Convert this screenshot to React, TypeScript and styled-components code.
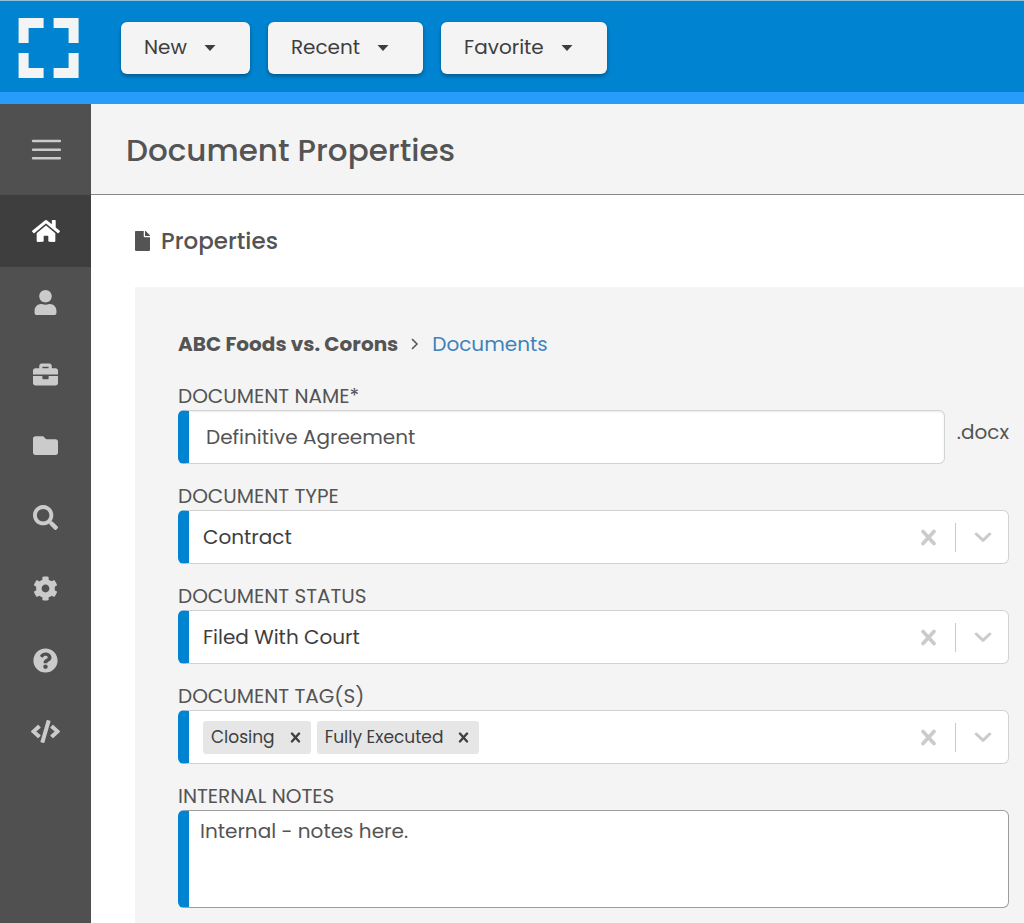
import React from "react";
import styled, { createGlobalStyle } from "styled-components";
import {
  FaHome,
  FaUser,
  FaBriefcase,
  FaFolder,
  FaSearch,
  FaCog,
  FaQuestionCircle,
  FaCode,
  FaFile,
} from "react-icons/fa";

const color = {
  brand: "#0084d1",
  brandLight: "#269df9",
  sidebar: "#505050",
  sidebarActive: "#3e3e3e",
  surface: "#f4f4f4",
  text: "#545454",
  dark: "#3e3e3e",
  border: "#d2d2d2",
  muted: "#cbcbcb",
};

const GlobalStyle = createGlobalStyle`
  *, *::before, *::after { box-sizing: border-box; }
  body {
    margin: 0;
    background: #fff;
    color: ${color.text};
    font-family: Poppins, Inter, "Open Sans", sans-serif;
    font-size: 20px;
    font-weight: 400;
    line-height: 30px;
    font-feature-settings: "cv11" 1;
  }
  button, input, select, textarea {
    font: inherit;
    font-feature-settings: inherit;
    color: inherit;
    margin: 0;
  }
  button { cursor: pointer; }
`;

const Page = styled.div`
  display: flex;
  flex-direction: column;
  min-height: 100vh;
`;

const TopBar = styled.header`
  display: flex;
  align-items: center;
  gap: 18px;
  height: 104px;
  padding: 2px 18px 0;
  background: ${color.brand};
  border-top: 1px solid #8fc0dc;
  border-bottom: 12px solid ${color.brandLight};
`;

const LogoLink = styled.a`
  display: flex;
  margin-right: 24px;
  color: ${color.surface};
`;

const MenuButton = styled.button`
  display: flex;
  align-items: center;
  gap: 17px;
  height: 52px;
  padding: 0 34px 2px 23px;
  border: 0;
  border-radius: 6px;
  background: ${color.surface};
  color: ${color.dark};
  box-shadow: 0 2px 4px rgba(0, 0, 0, 0.35);
`;

const Columns = styled.div`
  display: flex;
  flex: 1;
`;

const Sidebar = styled.nav`
  flex: none;
  width: 91px;
  background: ${color.sidebar};
`;

const MenuToggle = styled.button`
  display: flex;
  align-items: center;
  justify-content: center;
  width: 100%;
  height: 91px;
  padding: 0;
  border: 0;
  background: none;
  color: ${color.muted};
`;

const NavList = styled.ul`
  display: grid;
  grid-auto-rows: 1fr;
  height: 572px;
  margin: 0;
  padding: 0;
  list-style: none;
`;

const NavLink = styled.a<{ $active?: boolean }>`
  display: flex;
  align-items: center;
  justify-content: center;
  height: 100%;
  padding-top: 1px;
  font-size: 25px;
  background: ${(p) => (p.$active ? color.sidebarActive : "transparent")};
  color: ${(p) => (p.$active ? "#fff" : color.muted)};
`;

const Main = styled.main`
  display: flex;
  flex: 1;
  flex-direction: column;
  min-width: 0;
`;

const TitleBar = styled.div`
  display: flex;
  align-items: center;
  height: 91px;
  padding: 2px 35px 0;
  background: ${color.surface};
  border-bottom: 1px solid #868686;
`;

const Title = styled.h1`
  margin: 0;
  font-size: 31px;
  font-weight: 500;
  line-height: 48px;
`;

const SectionTitle = styled.h2`
  display: flex;
  align-items: center;
  gap: 11px;
  height: 92px;
  margin: 0;
  padding: 0 44px;
  font-size: 23px;
  font-weight: 500;

  svg { width: 15px; height: 20px; }
`;

const Panel = styled.form`
  flex: 1;
  margin-left: 44px;
  padding: 42px 15px 15px 43px;
  background: ${color.surface};
`;

const Breadcrumb = styled.div`
  display: flex;
  align-items: center;
  gap: 13px;
  margin-bottom: 23px;
`;

const Matter = styled.strong`
  font-weight: 700;
`;

const CrumbLink = styled.a`
  color: #3d82bb;
  text-decoration: none;
`;

const Field = styled.div`
  display: flex;
  flex-direction: column;
  margin-bottom: 18px;

  &:last-child { margin-bottom: 0; }
`;

const Label = styled.label`
  line-height: 28px;
  text-transform: uppercase;
`;

const NameRow = styled.div`
  display: flex;
  gap: 12px;
`;

const Extension = styled.span`
  padding-top: 7px;
`;

const TextInput = styled.input`
  flex: 1;
  min-width: 0;
  height: 54px;
  padding: 0 17px;
  border: 1px solid ${color.border};
  border-left: 11px solid ${color.brand};
  border-radius: 6px;
  background: #fff;
  box-shadow: inset 0 1px 2px rgba(0, 0, 0, 0.08);
  outline: 0;
`;

const Control = styled.div`
  display: flex;
  align-items: center;
  height: 54px;
  border: 1px solid ${color.border};
  border-left: 11px solid ${color.brand};
  border-radius: 6px;
  background: #fff;
  color: ${color.dark};
`;

const Select = styled.select`
  flex: 1;
  align-self: stretch;
  min-width: 0;
  padding: 0 14px;
  border: 0;
  background: none;
  appearance: none;
  outline: 0;
`;

const Tags = styled.div`
  display: flex;
  flex: 1;
  gap: 6px;
  padding-left: 14px;
`;

const Tag = styled.span`
  display: flex;
  align-items: center;
  gap: 15px;
  height: 33px;
  padding: 0 10px 0 8px;
  border-radius: 3px;
  background: #e6e6e6;
  font-size: 17px;
`;

const IconButton = styled.button`
  display: flex;
  padding: 0;
  border: 0;
  background: none;
`;

const Indicators = styled.div`
  display: flex;
  align-items: center;
  gap: 18px;
  padding-right: 16px;
  color: ${color.muted};
`;

const Divider = styled.span`
  width: 1px;
  height: 29px;
  background: ${color.muted};
`;

const Notes = styled.textarea`
  display: block;
  height: 98px;
  padding: 5px 11px;
  border: 1px solid #9c9c9c;
  border-left: 11px solid ${color.brand};
  border-radius: 6px;
  background: #fff;
  resize: none;
  outline: 0;
`;

const Logo = () => (
  <svg width="61" height="60" viewBox="0 0 61 60" fill="currentColor" aria-hidden="true">
    <path d="M.6 0h25v10h-15v15H.6zM35.600 0h25v25h-10V10h-15zM.6 35h10v15h15v10H.6zM50.600 35h10v25h-25V50h15z" />
  </svg>
);

const Caret = () => (
  <svg width="12" height="8" viewBox="0 0 12 8" fill="currentColor" aria-hidden="true">
    <path d="M.5 2h11L6 8z" />
  </svg>
);

const Bars = () => (
  <svg width="30" height="22" viewBox="0 0 30 22" stroke="currentColor" strokeWidth="2.400" strokeLinecap="round" aria-hidden="true">
    <path d="M2 2h27M2 10.700h27M2 19.300h27" />
  </svg>
);

const Cross = ({ size, weight }: { size: number; weight: number }) => (
  <svg width={size} height={size} viewBox="0 0 14 14" stroke="currentColor" strokeWidth={weight} strokeLinecap="round" aria-hidden="true">
    <path d="M2.500 2l9 10M11.500 2l-9 10" />
  </svg>
);

const Chevron = () => (
  <svg width="18" height="10" viewBox="0 0 18 10" fill="none" stroke="currentColor" strokeWidth="3" strokeLinecap="round" strokeLinejoin="round" aria-hidden="true">
    <path d="M2.300 2L9 8.300l6.700-6.300" />
  </svg>
);

const navItems = [
  { name: "Home", icon: <FaHome size={28} />, active: true },
  { name: "Contacts", icon: <FaUser /> },
  { name: "Matters", icon: <FaBriefcase /> },
  { name: "Documents", icon: <FaFolder /> },
  { name: "Search", icon: <FaSearch /> },
  { name: "Settings", icon: <FaCog /> },
  { name: "Help", icon: <FaQuestionCircle /> },
  { name: "Developer", icon: <FaCode size={29} /> },
];

const FieldIndicators = ({ name }: { name: string }) => (
  <Indicators>
    <IconButton type="button" aria-label={`Clear ${name}`}>
      <Cross size={17} weight={3} />
    </IconButton>
    <Divider />
    <IconButton type="button" aria-label={`Open ${name}`}>
      <Chevron />
    </IconButton>
  </Indicators>
);

const SelectField = ({ id, label, value }: { id: string; label: string; value: string }) => (
  <Field>
    <Label htmlFor={id}>{label}</Label>
    <Control>
      <Select id={id} defaultValue={value}>
        <option>{value}</option>
      </Select>
      <FieldIndicators name={label} />
    </Control>
  </Field>
);

export default function App() {
  return (
    <Page>
      <GlobalStyle />
      <TopBar>
        <LogoLink href="#" aria-label="Dashboard">
          <Logo />
        </LogoLink>
        {["New", "Recent", "Favorite"].map((item) => (
          <MenuButton key={item} type="button">
            {item}
            <Caret />
          </MenuButton>
        ))}
      </TopBar>
      <Columns>
        <Sidebar>
          <MenuToggle type="button" aria-label="Toggle menu">
            <Bars />
          </MenuToggle>
          <NavList>
            {navItems.map((item) => (
              <li key={item.name}>
                <NavLink href="#" aria-label={item.name} $active={item.active}>
                  {item.icon}
                </NavLink>
              </li>
            ))}
          </NavList>
        </Sidebar>
        <Main>
          <TitleBar>
            <Title>Document Properties</Title>
          </TitleBar>
          <SectionTitle>
            <FaFile />
            Properties
          </SectionTitle>
          <Panel>
            <Breadcrumb>
              <Matter>ABC Foods vs. Corons</Matter>
              <svg width="8" height="12" viewBox="0 0 8 12" fill="none" stroke="currentColor" strokeWidth="1.500" aria-hidden="true">
                <path d="M1 1l5 5-5 5" />
              </svg>
              <CrumbLink href="#">Documents</CrumbLink>
            </Breadcrumb>
            <Field>
              <Label htmlFor="name">Document Name*</Label>
              <NameRow>
                <TextInput id="name" type="text" defaultValue="Definitive Agreement" />
                <Extension>.docx</Extension>
              </NameRow>
            </Field>
            <SelectField id="type" label="Document Type" value="Contract" />
            <SelectField id="status" label="Document Status" value="Filed With Court" />
            <Field role="group" aria-labelledby="tags">
              <Label as="span" id="tags">Document Tag(s)</Label>
              <Control>
                <Tags>
                  {["Closing", "Fully Executed"].map((tag) => (
                    <Tag key={tag}>
                      {tag}
                      <IconButton type="button" aria-label={`Remove ${tag}`}>
                        <Cross size={11} weight={3} />
                      </IconButton>
                    </Tag>
                  ))}
                </Tags>
                <FieldIndicators name="Document Tag(s)" />
              </Control>
            </Field>
            <Field>
              <Label htmlFor="notes">Internal Notes</Label>
              <Notes id="notes" defaultValue="Internal - notes here." />
            </Field>
          </Panel>
        </Main>
      </Columns>
    </Page>
  );
}
